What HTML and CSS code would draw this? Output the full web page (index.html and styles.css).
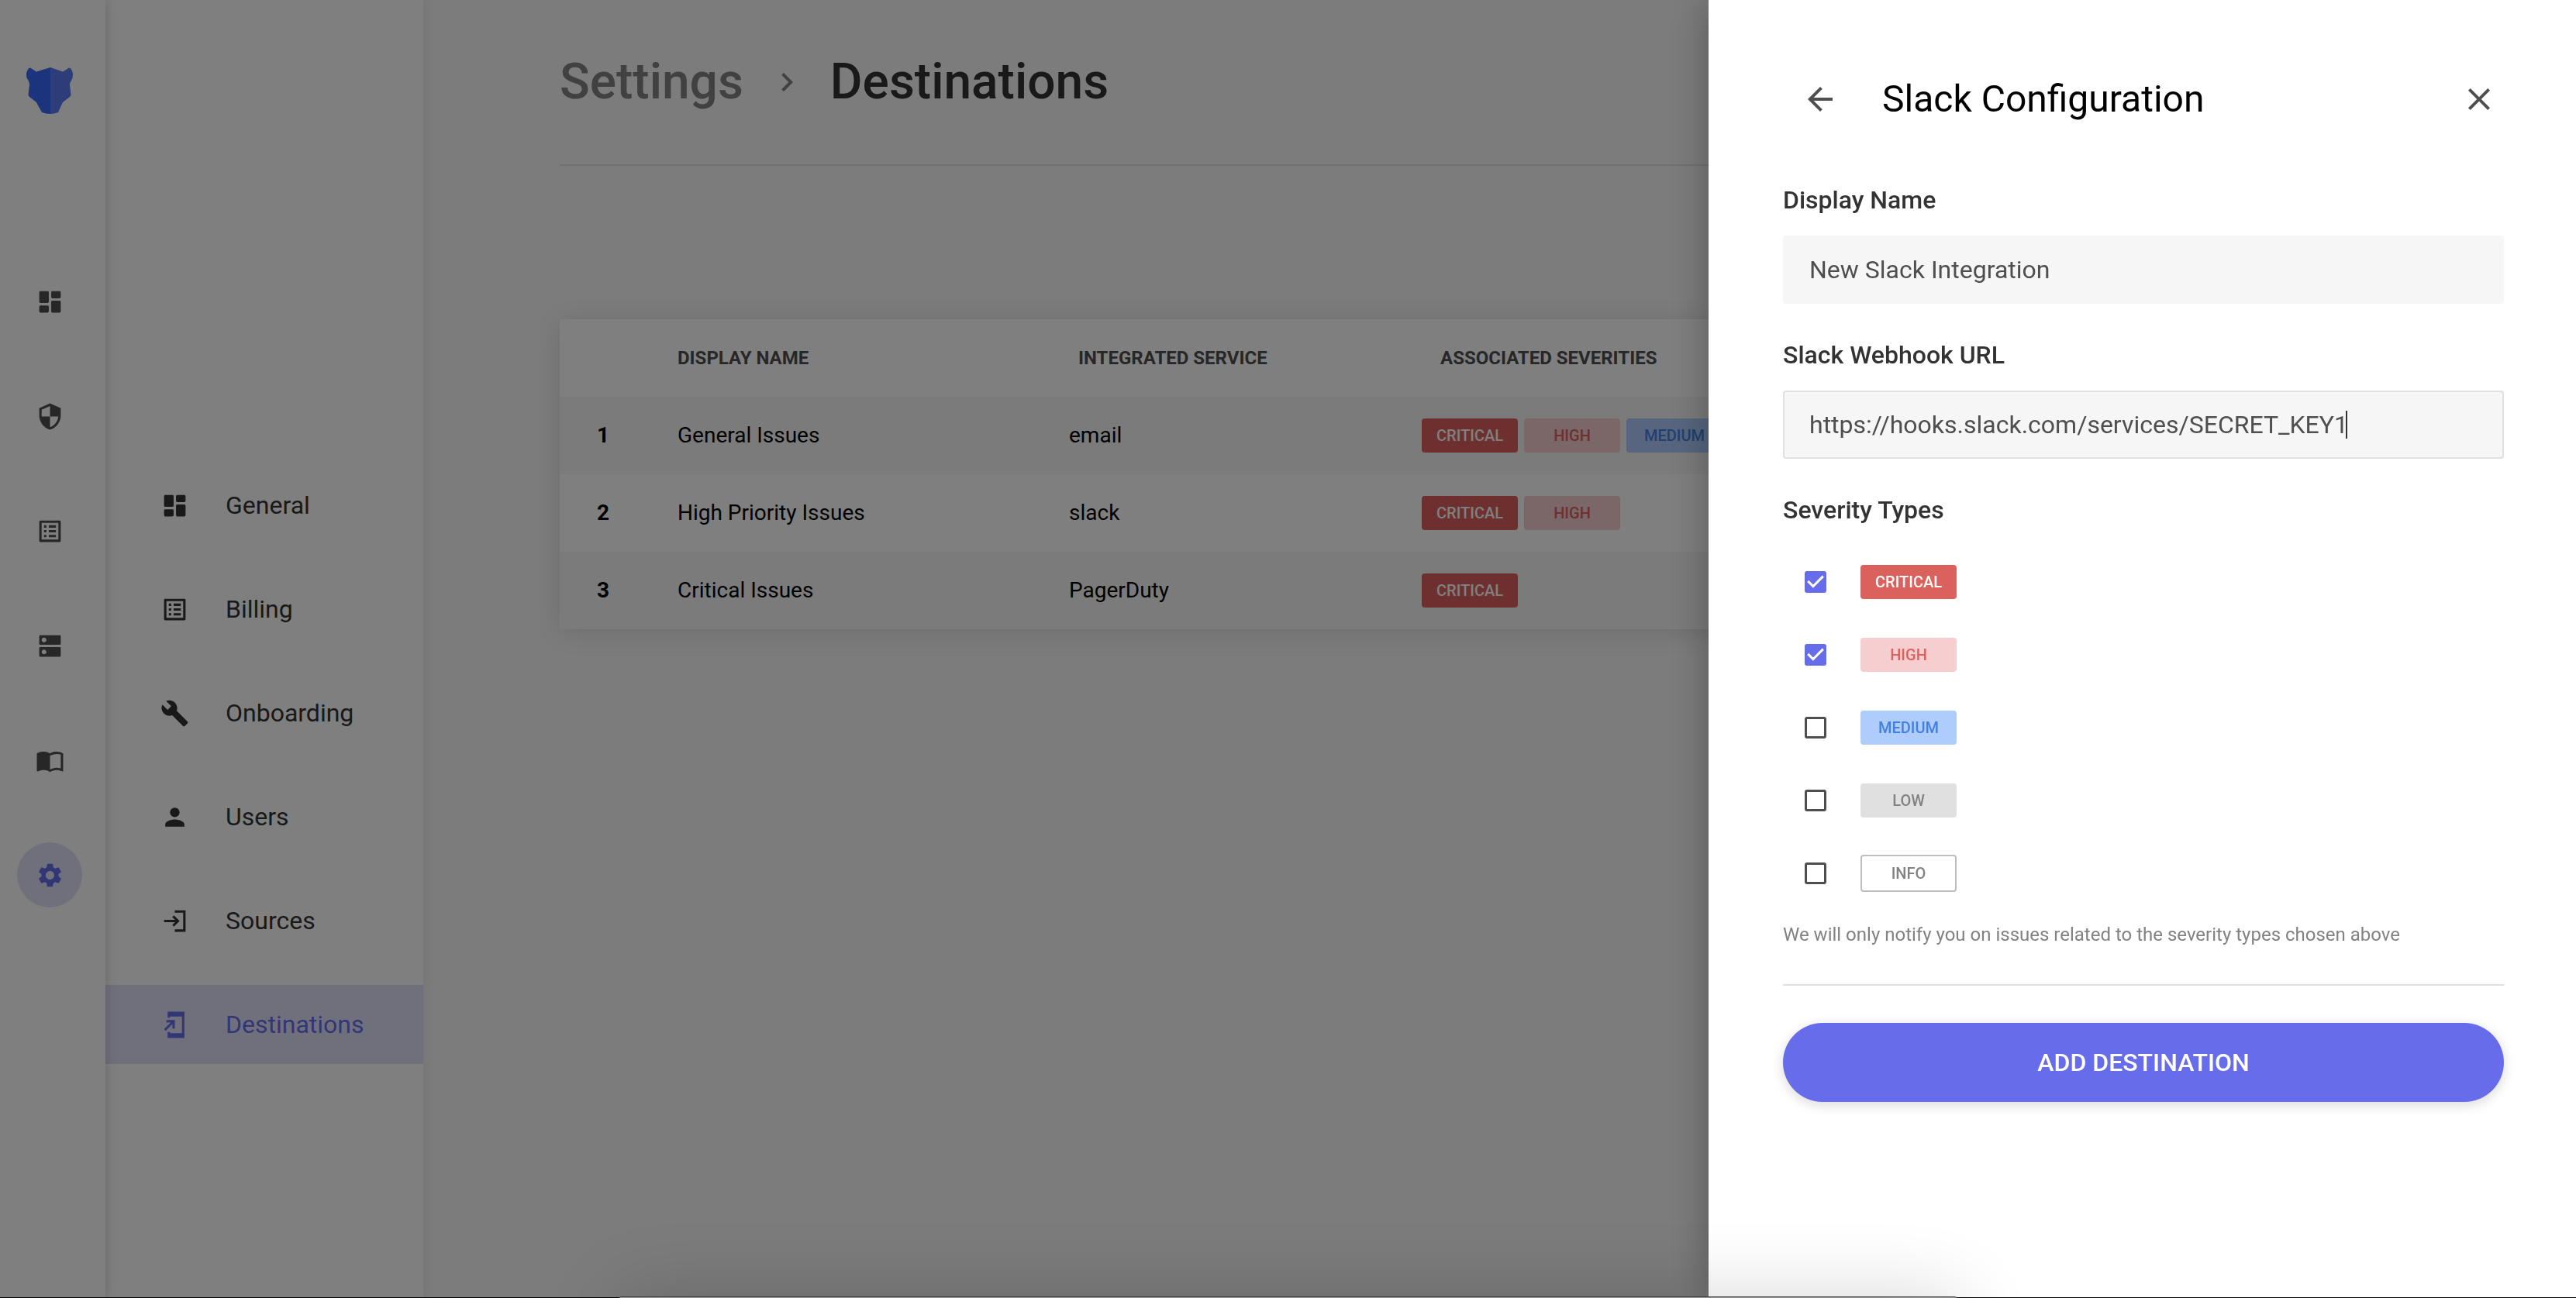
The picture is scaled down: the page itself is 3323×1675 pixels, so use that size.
FILE: index.html
```html
<!DOCTYPE html>
<html lang="en">
<head>
<meta charset="utf-8">
<title>Destinations</title>
<link rel="stylesheet" href="styles.css">
</head>
<body>
<svg class="sprite" aria-hidden="true">
  <symbol id="i-dashboard" viewBox="0 0 24 24"><path d="M4 13h6c.55 0 1-.45 1-1V4c0-.55-.45-1-1-1H4c-.55 0-1 .45-1 1v8c0 .55.45 1 1 1zm0 8h6c.55 0 1-.45 1-1v-4c0-.55-.45-1-1-1H4c-.55 0-1 .45-1 1v4c0 .55.45 1 1 1zm10 0h6c.55 0 1-.45 1-1v-8c0-.55-.45-1-1-1h-6c-.55 0-1 .45-1 1v8c0 .55.45 1 1 1zM13 4v4c0 .55.45 1 1 1h6c.55 0 1-.45 1-1V4c0-.55-.45-1-1-1h-6c-.55 0-1 .45-1 1z"/></symbol>
  <symbol id="i-shield" viewBox="0 0 24 24"><path d="M12 1L3 5v6c0 5.550 3.840 10.740 9 12 5.160-1.260 9-6.450 9-12V5l-9-4zm0 10.990h7c-.53 4.120-3.280 7.790-7 8.940V12H5V6.300l7-3.110v8.800z"/></symbol>
  <symbol id="i-list" viewBox="0 0 24 24"><path d="M19 5v14H5V5h14m1.100-2H3.900c-.5 0-.9.4-.9.900v16.200c0 .4.400.900.900.900h16.200c.4 0 .9-.5.900-.900V3.900c0-.5-.5-.9-.9-.9zM11 7h6v2h-6V7zm0 4h6v2h-6v-2zm0 4h6v2h-6zM7 7h2v2H7zm0 4h2v2H7zm0 4h2v2H7z"/></symbol>
  <symbol id="i-dns" viewBox="0 0 24 24"><path d="M20.200 13H3.800c-.45 0-.8.35-.8.800v6.400c0 .45.35.8.800.8h16.400c.45 0 .8-.35.800-.8v-6.400c0-.45-.35-.8-.8-.8zM7 19c-1.100 0-2-.9-2-2s.9-2 2-2 2 .9 2 2-.9 2-2 2zM20.200 3H3.800c-.45 0-.8.35-.8.800v6.400c0 .45.35.8.800.8h16.400c.45 0 .8-.35.800-.8V3.800c0-.45-.35-.8-.8-.8zM7 9c-1.100 0-2-.9-2-2s.9-2 2-2 2 .9 2 2-.9 2-2 2z"/></symbol>
  <symbol id="i-book" viewBox="0 0 24 24"><path d="M21 5c-1.110-.35-2.330-.5-3.500-.5-1.950 0-4.050.4-5.500 1.500-1.450-1.100-3.550-1.500-5.500-1.500S2.450 4.900 1 6v14.650c0 .25.25.5.5.5.1 0 .15-.05.250-.05C3.100 20.450 5.050 20 6.500 20c1.950 0 4.050.4 5.500 1.500 1.350-.85 3.800-1.500 5.500-1.500 1.650 0 3.350.3 4.750 1.050.1.050.15.050.250.050.25 0 .5-.25.5-.5V6c-.6-.45-1.250-.75-2-1zm0 13.500c-1.100-.35-2.300-.5-3.500-.5-1.700 0-4.150.65-5.500 1.500V8c1.350-.85 3.800-1.500 5.500-1.500 1.200 0 2.400.15 3.500.5v11.500z"/></symbol>
  <symbol id="i-gear" viewBox="0 0 24 24"><path d="M19.140 12.940c.04-.3.060-.61.060-.94 0-.32-.02-.64-.07-.94l2.030-1.580c.18-.14.230-.41.120-.61l-1.920-3.320c-.12-.22-.37-.29-.59-.22l-2.390.96c-.5-.38-1.030-.7-1.620-.94l-.36-2.540c-.04-.24-.24-.41-.48-.41h-3.840c-.24 0-.43.17-.47.410l-.36 2.540c-.59.24-1.130.57-1.620.94l-2.390-.96c-.22-.08-.47 0-.59.220L2.740 8.870c-.12.210-.08.470.12.610l2.030 1.580c-.05.3-.09.63-.09.940s.02.640.070.940l-2.030 1.580c-.18.140-.23.410-.12.610l1.920 3.320c.12.220.37.290.59.220l2.390-.96c.5.380 1.030.7 1.620.940l.36 2.540c.05.240.24.410.48.410h3.840c.24 0 .44-.17.470-.41l.36-2.540c.59-.24 1.130-.56 1.620-.94l2.390.96c.22.080.47 0 .59-.22l1.920-3.320c.12-.22.070-.47-.12-.61l-2.010-1.580zM12 15.600c-1.980 0-3.600-1.620-3.600-3.600s1.620-3.600 3.600-3.600 3.600 1.620 3.600 3.600-1.620 3.600-3.600 3.600z"/></symbol>
  <symbol id="i-wrench" viewBox="0 0 24 24"><path d="M22.700 19l-9.100-9.100c.9-2.300.4-5-1.500-6.900-2-2-5-2.400-7.400-1.300L9 6 6 9 1.600 4.700C.4 7.100.9 10.100 2.900 12.100c1.900 1.900 4.600 2.400 6.900 1.500l9.100 9.100c.4.400 1 .4 1.400 0l2.300-2.300c.5-.4.500-1.100.1-1.400z"/></symbol>
  <symbol id="i-person" viewBox="0 0 24 24"><path d="M12 12c2.210 0 4-1.790 4-4s-1.790-4-4-4-4 1.790-4 4 1.790 4 4 4zm0 2c-2.670 0-8 1.340-8 4v2h16v-2c0-2.660-5.330-4-8-4z"/></symbol>
  <symbol id="i-source" viewBox="0 0 24 24"><path d="M21 3H12v2h7v14h-7v2h9zM3 11v2h9.200l-2.300 2.300 1.400 1.400L16 12l-4.700-4.700-1.400 1.400 2.300 2.300z"/></symbol>
  <symbol id="i-destination" viewBox="0 0 24 24"><path d="M20 1H6v5h2V5h10v14H8v-1H6v5h14V1zM10 15h2V8H5v2h3.590L3 15.590 4.410 17 10 11.410z"/></symbol>
  <symbol id="i-chevron" viewBox="0 0 24 24"><path d="M10 6L8.590 7.410 13.170 12l-4.580 4.590L10 18l6-6z"/></symbol>
  <symbol id="i-back" viewBox="0 0 24 24"><path d="M20 11H7.830l5.590-5.590L12 4l-8 8 8 8 1.410-1.410L7.830 13H20v-2z"/></symbol>
  <symbol id="i-close" viewBox="0 0 24 24"><path d="M19 6.410L17.590 5 12 10.590 6.410 5 5 6.410 10.590 12 5 17.590 6.410 19 12 13.410 17.590 19 19 17.590 13.410 12z"/></symbol>
</svg>

<div class="app">
  <nav class="rail" aria-label="Main">
    <a class="logo" href="#" aria-label="Home">
      <svg viewBox="0 0 60 60"><path fill="#3769f8" d="M31 0 L13 5.500 L5 .5 Q3 0 2.500 2 C-1 6-.5 13 2 16 Q4 19 4 22 L2.500 35 Q2.500 37 4 38 L13 45 L15 49 L20 58 Q25 60 31 60z"/><path fill="#5b7af5" d="M31 0 L47 5.500 L55 .5 Q57 0 57.500 2 C61 6 60.500 13 58 17 Q56 20 56 22 L57.500 35 Q57.500 37 56 38 L47 45 L45 49 L41 58 Q36 60 31 60z"/></svg>
    </a>
    <a class="rail-item" href="#" aria-label="Overview"><svg class="icon"><use href="#i-dashboard"/></svg></a>
    <a class="rail-item" href="#" aria-label="Security"><svg class="icon"><use href="#i-shield"/></svg></a>
    <a class="rail-item" href="#" aria-label="Alerts"><svg class="icon"><use href="#i-list"/></svg></a>
    <a class="rail-item" href="#" aria-label="Resources"><svg class="icon"><use href="#i-dns"/></svg></a>
    <a class="rail-item" href="#" aria-label="Documentation"><svg class="icon"><use href="#i-book"/></svg></a>
    <a class="rail-item active" href="#" aria-label="Settings"><svg class="icon"><use href="#i-gear"/></svg></a>
  </nav>

  <nav class="menu" aria-label="Settings">
    <a class="menu-item" href="#"><svg class="icon"><use href="#i-dashboard"/></svg>General</a>
    <a class="menu-item" href="#"><svg class="icon"><use href="#i-list"/></svg>Billing</a>
    <a class="menu-item" href="#"><svg class="icon"><use href="#i-wrench"/></svg>Onboarding</a>
    <a class="menu-item" href="#"><svg class="icon"><use href="#i-person"/></svg>Users</a>
    <a class="menu-item" href="#"><svg class="icon"><use href="#i-source"/></svg>Sources</a>
    <a class="menu-item active" href="#"><svg class="icon"><use href="#i-destination"/></svg>Destinations</a>
  </nav>

  <main class="content">
    <header class="crumbs">
      <a class="crumb" href="#">Settings</a>
      <svg class="icon-lg crumb-arrow"><use href="#i-chevron"/></svg>
      <h1 class="crumb-current">Destinations</h1>
    </header>
    <div class="card">
      <table class="table">
        <colgroup><col class="col-index"><col class="col-name"><col class="col-service"><col></colgroup>
        <thead>
          <tr><th></th><th>DISPLAY NAME</th><th class="th-service">INTEGRATED SERVICE</th><th class="th-severity">ASSOCIATED SEVERITIES</th></tr>
        </thead>
        <tbody>
          <tr><th scope="row">1</th><td>General Issues</td><td>email</td><td><div class="chips"><span class="chip critical">CRITICAL</span><span class="chip high">HIGH</span><span class="chip medium">MEDIUM</span></div></td></tr>
          <tr><th scope="row">2</th><td>High Priority Issues</td><td>slack</td><td><div class="chips"><span class="chip critical">CRITICAL</span><span class="chip high">HIGH</span></div></td></tr>
          <tr><th scope="row">3</th><td>Critical Issues</td><td>PagerDuty</td><td><div class="chips"><span class="chip critical">CRITICAL</span></div></td></tr>
        </tbody>
      </table>
    </div>
  </main>
</div>

<div class="backdrop">
  <aside class="drawer" role="dialog" aria-label="Slack Configuration">
    <header class="drawer-head">
      <button class="icon-button" type="button" aria-label="Back"><svg class="icon-lg"><use href="#i-back"/></svg></button>
      <h2 class="drawer-title">Slack Configuration</h2>
      <button class="icon-button" type="button" aria-label="Close"><svg class="icon-lg"><use href="#i-close"/></svg></button>
    </header>
    <form class="form">
      <label class="label" for="name">Display Name</label>
      <input class="input" id="name" type="text" value="New Slack Integration">
      <label class="label" for="url">Slack Webhook URL</label>
      <div class="field">
        <input class="input focused" id="url" type="text" value="https://hooks.slack.com/services/SECRET_KEY1">
        <span class="caret"></span>
      </div>
      <fieldset class="severities">
        <legend class="label">Severity Types</legend>
        <label class="severity"><input class="check" type="checkbox" checked><span class="chip critical">CRITICAL</span></label>
        <label class="severity"><input class="check" type="checkbox" checked><span class="chip high">HIGH</span></label>
        <label class="severity"><input class="check" type="checkbox"><span class="chip medium">MEDIUM</span></label>
        <label class="severity"><input class="check" type="checkbox"><span class="chip low">LOW</span></label>
        <label class="severity"><input class="check" type="checkbox"><span class="chip info">INFO</span></label>
      </fieldset>
      <p class="hint">We will only notify you on issues related to the severity types chosen above</p>
      <hr class="rule">
      <button class="submit" type="button">ADD DESTINATION</button>
    </form>
  </aside>
</div>
<div class="window-edge"></div>
<div class="dock"></div>
</body>
</html>
```
FILE: styles.css
```css
* { box-sizing: border-box; }

body {
  margin: 0;
  font-family: Roboto, "Liberation Sans", sans-serif;
  font-size: 32px;
  line-height: 40px;
  color: #333;
  background: #f8f8f8;
  overflow: hidden;
}

a { color: inherit; text-decoration: none; }
h1, h2, p { margin: 0; font-weight: 400; }
.sprite { display: none; }
svg { display: block; fill: currentColor; flex: none; }
.icon { width: 37px; height: 37px; }
.icon-lg { width: 48px; height: 48px; color: #4f4f4f; }

.app { display: flex; min-height: 100vh; }

.rail {
  position: relative;
  z-index: 2;
  flex: none;
  width: 136px;
  padding: 87px 8px 0 0;
  display: flex;
  flex-direction: column;
  align-items: center;
  gap: 64px;
  background: #fff;
  color: #4f4f4f;
  box-shadow: 0 0 16px rgba(0, 0, 0, .2);
}
.logo { margin-bottom: 136px; }
.logo svg { width: 60px; height: 60px; }
.rail-item {
  width: 84px;
  height: 84px;
  border-radius: 50%;
  display: grid;
  place-items: center;
}

.menu {
  position: relative;
  z-index: 1;
  flex: none;
  width: 410px;
  padding-top: 601px;
  display: flex;
  flex-direction: column;
  gap: 32px;
  background: #fff;
  box-shadow: 0 0 16px rgba(0, 0, 0, .08);
}
.menu-item {
  height: 102px;
  padding-left: 71px;
  display: flex;
  align-items: center;
  gap: 47px;
  color: #333;
}
.rail-item.active, .menu-item.active { background: #e1e1fb; color: #676ceb; }

.content { flex: 1; min-width: 0; padding: 0 176px; }
.crumbs {
  height: 214px;
  margin-bottom: 198px;
  border-bottom: 2px solid #e0e0e0;
  display: flex;
  align-items: center;
  gap: 32px;
}
.crumb, .crumb-current { font-size: 64px; line-height: 80px; font-weight: 500; }
.crumb, .crumb-arrow { color: #828282; }

.card {
  border-radius: 4px;
  overflow: hidden;
  background: #fff;
  box-shadow: 0 4px 32px rgba(0, 0, 0, .12);
}
.table { width: 100%; border-collapse: collapse; table-layout: fixed; font-size: 28px; color: #000; }
.col-index { width: 152px; }
.col-name { width: 505px; }
.col-service { width: 455px; }
.table tr { height: 100px; }
.table th, .table td { padding: 0; text-align: left; vertical-align: middle; }
.table thead th { font-size: 24px; font-weight: 700; color: #4f4f4f; }
.table .th-service { padding-left: 12px; }
.table .th-severity { padding-left: 24px; }
.table tbody th { padding-left: 48px; font-weight: 700; }
.table tbody tr:nth-child(odd) { background: #f6f6f6; }
.chips { display: flex; gap: 8px; }

.chip {
  flex: none;
  width: 124px;
  height: 44px;
  border-radius: 4px;
  display: grid;
  place-items: center;
  font-size: 20px;
  line-height: 24px;
  font-weight: 500;
}
.critical { background: #db615d; color: #fff; }
.high { background: #f7cecf; color: #db615d; }
.medium { background: #afcdfc; color: #4380e4; }
.low { background: #e0e0e0; color: #828282; }
.info { height: 48px; border: 2px solid #bdbdbd; color: #828282; }

.backdrop {
  position: fixed;
  inset: 0;
  z-index: 10;
  display: flex;
  justify-content: flex-end;
  background: rgba(0, 0, 0, .5);
}
.drawer {
  width: 1119px;
  padding: 96px 93px 0 96px;
  background: #fff;
  box-shadow: 0 0 48px rgba(0, 0, 0, .3);
}
.drawer-head { display: flex; align-items: center; padding: 0 8px 0 24px; }
.icon-button { width: 48px; padding: 0; border: 0; background: none; }
.icon-button + .drawer-title { flex: 1; padding-left: 56px; }
.drawer-title { font-size: 48px; line-height: 64px; color: #000; }

.form { display: flex; flex-direction: column; padding-top: 78px; }
.label { height: 40px; margin-bottom: 26px; padding: 0; font-weight: 500; }
.input {
  width: 100%;
  height: 88px;
  margin-bottom: 46px;
  padding: 0 32px;
  border: 2px solid #f6f6f6;
  border-radius: 4px;
  background: #f6f6f6;
  font: inherit;
  color: #4f4f4f;
}
.focused { border-color: #e0e0e0; }
.field { position: relative; }
.caret { position: absolute; left: 726px; top: 26px; width: 2px; height: 36px; background: #333; }

.severities { margin: 0; padding: 0; border: 0; }
.severity { height: 94px; padding-left: 28px; display: flex; align-items: center; gap: 44px; }
.check {
  appearance: none;
  width: 28px;
  height: 28px;
  margin: 0;
  border: 3px solid #4f4f4f;
  border-radius: 3px;
}
.check:checked {
  border: 0;
  background: #676ceb url("data:image/svg+xml,%3Csvg xmlns='http://www.w3.org/2000/svg' viewBox='3 3 18 18'%3E%3Cpath fill='white' d='M10 17l-5-5 1.410-1.410L10 14.170l7.590-7.590L19 8z'/%3E%3C/svg%3E");
}
.hint { margin: 12px 0 44px; font-size: 24px; color: #828282; }
.rule { width: 100%; margin: 0 0 48px; border: 0; border-top: 2px solid #e0e0e0; }
.submit {
  height: 102px;
  border: 0;
  border-radius: 51px;
  background: #676ceb;
  color: #fff;
  font: inherit;
  font-weight: 500;
  box-shadow: 0 4px 16px rgba(0, 0, 0, .15);
}

.window-edge { position: fixed; z-index: 11; left: 0; right: 0; bottom: 0; height: 1px; background: #000; }
.dock {
  position: fixed;
  z-index: 12;
  bottom: -160px;
  left: 24%;
  right: 24%;
  height: 162px;
  border-top: 1px solid #3a3a3a;
  border-radius: 4px;
  background: #999;
  box-shadow: 0 0 100px rgba(0, 0, 0, .16);
}
```
